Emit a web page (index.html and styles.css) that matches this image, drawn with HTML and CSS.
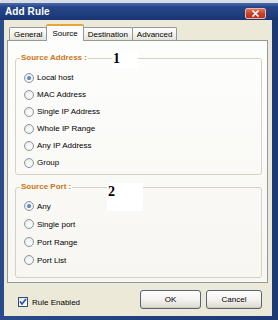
FILE: index.html
```html
<!DOCTYPE html>
<html>
<head>
    <title>Add Rule</title>
    <link rel="stylesheet" href="styles.css">
</head>
<body>
    <div class="window">
        <div class="titlebar">
            <span class="title">Add Rule</span>
            <span class="close">
                <svg width="9" height="7" viewBox="0 0 9 7"><path d="M1.5 0.5 L7.5 6.5 M7.5 0.5 L1.5 6.5" stroke="#fff" stroke-width="1.6"/></svg>
            </span>
        </div>

        <div class="client">
            <div class="tabs">
                <div class="tab">General</div>
                <div class="tab active">Source</div>
                <div class="tab">Destination</div>
                <div class="tab">Advanced</div>
            </div>

            <div class="panel">
                <fieldset class="group address">
                    <legend>Source Address :</legend>
                    <label class="option"><span class="radio on"></span>Local host</label>
                    <label class="option"><span class="radio"></span>MAC Address</label>
                    <label class="option"><span class="radio"></span>Single IP Address</label>
                    <label class="option"><span class="radio"></span>Whole IP Range</label>
                    <label class="option"><span class="radio"></span>Any IP Address</label>
                    <label class="option"><span class="radio"></span>Group</label>
                </fieldset>

                <fieldset class="group port">
                    <legend>Source Port :</legend>
                    <label class="option"><span class="radio on"></span>Any</label>
                    <label class="option"><span class="radio"></span>Single port</label>
                    <label class="option"><span class="radio"></span>Port Range</label>
                    <label class="option"><span class="radio"></span>Port List</label>
                </fieldset>
            </div>

            <div class="footer">
                <label class="check">
                    <span class="box">
                        <svg width="8" height="8" viewBox="0 0 8 8"><path d="M1 3.5 L3 6 L7 1" fill="none" stroke="#2a4fa0" stroke-width="1.6"/></svg>
                    </span>
                    Rule Enabled
                </label>
                <div class="buttons">
                    <button class="btn ok">OK</button>
                    <button class="btn cancel">Cancel</button>
                </div>
            </div>
        </div>

        <!-- numbers written over the screenshot -->
        <span class="note note-1">1</span>
        <span class="note note-2">2</span>
    </div>
</body>
</html>
```

FILE: styles.css
```css
body {
    margin: 0;
    padding: 0;
    background-color: #d9dce3;
    font-family: "Liberation Sans", Arial, sans-serif;
    font-size: 8px;
    color: #000;
}

.window {
    position: relative;
    width: 278px;
    height: 317px;
    margin-top: 3px;
    background: linear-gradient(90deg, #2a4a8a, #22417f 50%, #1d3a76);
}

.titlebar {
    height: 17px;
    display: flex;
    align-items: center;
    justify-content: space-between;
    padding: 0 12px 0 5px;
    background: linear-gradient(#4a6aa8, #25458a 25%, #1f3d7c 75%, #183470);
}

.title {
    color: #fff;
    font-weight: bold;
    font-size: 10px;
    letter-spacing: 0.1px;
}

.close {
    width: 21px;
    height: 11px;
    margin-top: 3px;
    border-radius: 2px;
    border: 1px solid #e9b8a8;
    box-sizing: border-box;
    background: linear-gradient(#e0775a, #c9422a 50%, #b63420);
    display: flex;
    align-items: center;
    justify-content: center;
}

.client {
    height: 296px;
    margin: 0 6px 0 4px;
    padding: 5px 4px 0 3px;
    box-sizing: border-box;
    background-color: #ece9d8;
}

.tabs {
    display: flex;
    align-items: flex-end;
    height: 15px;
    padding-left: 2px;
}

.tab {
    height: 13px;
    line-height: 13px;
    padding: 0 4px;
    border: 1px solid #919b9c;
    border-bottom: none;
    border-radius: 2px 2px 0 0;
    background: linear-gradient(#ffffff, #f1f0ea 60%, #e4e2d8);
    box-sizing: border-box;
    margin-right: -1px;
}

.tab.active {
    position: relative;
    z-index: 1;
    height: 17px;
    line-height: 15px;
    margin-bottom: -1px;
    padding: 0 5px;
    border-top: 2px solid #e8a33c;
    background: #fcfcfb;
}

.panel {
    height: 243px;
    box-sizing: border-box;
    border: 1px solid #919b9c;
    background: linear-gradient(#fdfdfc, #f7f6f1);
    padding: 12px 5px 0 7px;
}

.group {
    margin: 0;
    padding: 6px 4px 3px 4px;
    border: 1px solid #d5d2c3;
    border-radius: 3px;
}

.group legend {
    padding: 0 1px;
    line-height: 10px;
    height: 10px;
    font-weight: bold;
    color: #cc7422;
}

.group.port {
    margin-top: 7px;
    padding-top: 5px;
    padding-bottom: 8px;
}

.option {
    display: flex;
    align-items: center;
    height: 17px;
    padding-left: 4px;
}

.port .option {
    height: 18px;
}

.radio {
    position: relative;
    width: 10px;
    height: 10px;
    box-sizing: border-box;
    border: 1px solid #8796a6;
    border-radius: 50%;
    background: radial-gradient(circle at 60% 65%, #ffffff, #e6e5dc);
    margin-right: 3px;
}

.radio.on::after {
    content: "";
    position: absolute;
    left: 2px;
    top: 2px;
    width: 4px;
    height: 4px;
    border-radius: 50%;
    background: radial-gradient(circle at 40% 35%, #7aa0e0, #2a52a8);
}

.footer {
    display: flex;
    justify-content: space-between;
    align-items: flex-start;
    padding: 7px 6px 0 11px;
}

.check {
    display: flex;
    align-items: center;
    margin-top: 7px;
}

.box {
    width: 10px;
    height: 10px;
    box-sizing: border-box;
    border: 1px solid #2b4f82;
    background: linear-gradient(135deg, #e4e3dc, #ffffff);
    display: flex;
    align-items: center;
    justify-content: center;
    margin-right: 4px;
}

.buttons {
    display: flex;
    gap: 5px;
}

.btn {
    height: 19px;
    padding: 0;
    font-family: "Liberation Sans", Arial, sans-serif;
    font-size: 8px;
    color: #000;
    border: 1px solid #56657a;
    border-radius: 3px;
    background: linear-gradient(#ffffff, #f3f2ee 50%, #dcdad0);
    box-shadow: inset 0 -1px 0 #cfccc0;
}

.btn.ok {
    width: 61px;
}

.btn.cancel {
    width: 56px;
}

.note {
    position: absolute;
    font-family: "Liberation Serif", "Times New Roman", serif;
    font-weight: bold;
    font-size: 14px;
    line-height: 14px;
    background: #ffffff;
}

.note-1 {
    left: 112px;
    top: 48px;
    padding: 1px 18px 2px 1px;
}

.note-2 {
    left: 107px;
    top: 180px;
    padding: 2px 28px 12px 1px;
}
```
